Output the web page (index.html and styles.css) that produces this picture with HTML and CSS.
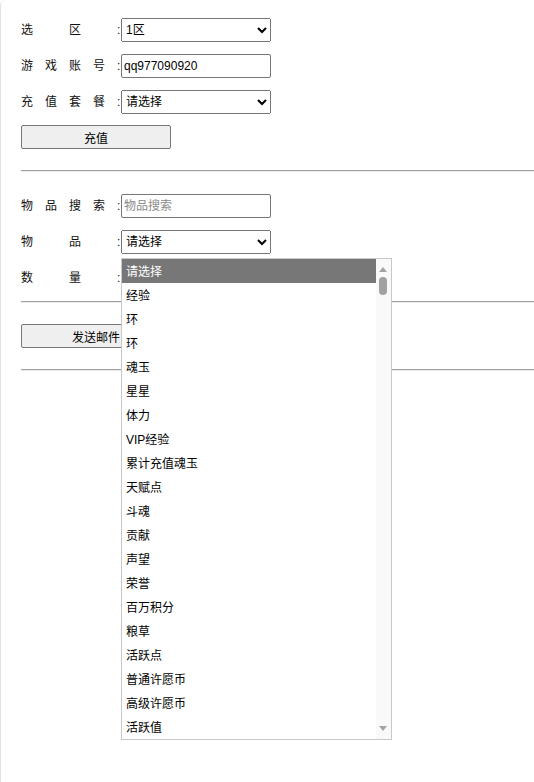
FILE: index.html
```html
<!DOCTYPE html>
<html lang="zh-CN">
<head>
<meta charset="utf-8">
<title>充值</title>
<link rel="stylesheet" href="styles.css">
</head>
<body>
<div class="frame">
  <div class="section first">
    <div class="row"><span class="label">选　区　:</span><select class="ctl"><option>1区</option></select></div>
    <div class="row"><span class="label">游戏账号:</span><input class="ctl" type="text" value="qq977090920"></div>
    <div class="row"><span class="label">充值套餐:</span><select class="ctl"><option>请选择</option></select></div>
    <div class="btn-row"><button class="btn">充值</button></div>
  </div>
  <hr class="rule">
  <div class="section">
    <div class="row"><span class="label">物品搜索:</span><input class="ctl" type="text" placeholder="物品搜索"></div>
    <div class="row menu-host"><span class="label">物　品　:</span><select class="ctl"><option>请选择</option></select>
      <div class="popup">
        <ul class="opts">
          <li class="sel">请选择</li>
          <li>经验</li>
          <li>环</li>
          <li>环</li>
          <li>魂玉</li>
          <li>星星</li>
          <li>体力</li>
          <li>VIP经验</li>
          <li>累计充值魂玉</li>
          <li>天赋点</li>
          <li>斗魂</li>
          <li>贡献</li>
          <li>声望</li>
          <li>荣誉</li>
          <li>百万积分</li>
          <li>粮草</li>
          <li>活跃点</li>
          <li>普通许愿币</li>
          <li>高级许愿币</li>
          <li>活跃值</li>
        </ul>
        <div class="sbar">
          <span class="arr up"></span>
          <span class="thumb"></span>
          <span class="arr down"></span>
        </div>
      </div>
    </div>
    <div class="row"><span class="label">数　量　:</span><input class="ctl" type="text"></div>
  </div>
  <hr class="rule mid">
  <div class="btn-row second"><button class="btn">发送邮件</button></div>
  <hr class="rule">
</div>
</body>
</html>
```
FILE: styles.css
```css
html, body {
  margin: 0;
  padding: 0;
  background: #fff;
}
body {
  font-family: "Liberation Sans", "Noto Sans CJK SC", sans-serif;
  font-size: 12px;
  color: #111;
}
.frame {
  min-height: 782px;
  box-sizing: border-box;
  border-left: 1px solid #e2e2e2;
  border-top-left-radius: 6px;
  padding-top: 18px;
}
.section {
  padding-left: 20px;
}
.row {
  display: flex;
  align-items: center;
  height: 24px;
  margin-bottom: 12px;
}
.row:last-child {
  margin-bottom: 0;
}
.label {
  width: 100px;
  letter-spacing: 12px;
  white-space: nowrap;
  line-height: 24px;
  color: #111;
}
.ctl {
  box-sizing: border-box;
  width: 150px;
  height: 24px;
  margin: 0;
  font-family: "Liberation Sans", "Noto Sans CJK SC", sans-serif;
  font-size: 12px;
  color: #000;
}
input.ctl {
  padding: 1px 2px;
  border: 1px solid #767676;
  border-radius: 2px;
}
input.ctl::placeholder {
  color: #8a8a8a;
}
.btn-row {
  margin-top: -1px;
}
.btn {
  box-sizing: border-box;
  width: 150px;
  height: 24px;
  margin: 0;
  padding: 0;
  background: #efefef;
  border: 1px solid #767676;
  border-radius: 2px;
  font-family: "Liberation Sans", "Noto Sans CJK SC", sans-serif;
  font-size: 12px;
  color: #000;
}
.rule {
  margin: 21px 0 22px 20px;
  height: 0;
  border: 0;
  border-top: 1px solid #a0a0a0;
  border-bottom: 1px solid #ececec;
}
.rule.mid {
  margin-top: 11px;
  margin-bottom: 21px;
}
.btn-row.second {
  margin: 0 0 0 20px;
}
.menu-host {
  position: relative;
}
.popup {
  position: absolute;
  left: 100px;
  top: 28px;
  width: 271px;
  height: 482px;
  box-sizing: border-box;
  border: 1px solid #c8c8c8;
  background: #fff;
  display: flex;
  z-index: 5;
}
.opts {
  list-style: none;
  margin: 0;
  padding: 0;
  flex: 1;
}
.opts li {
  box-sizing: border-box;
  height: 24px;
  padding-top: 2px;
  line-height: 22px;
  padding-left: 4px;
  color: #000;
  white-space: nowrap;
}
.opts li.sel {
  background: #777;
  color: #fff;
}
.sbar {
  width: 15px;
  background: #f9f9f9;
  position: relative;
}
.arr {
  position: absolute;
  left: 3px;
  width: 0;
  height: 0;
  border-left: 4.5px solid transparent;
  border-right: 4.5px solid transparent;
}
.arr.up {
  top: 8px;
  border-bottom: 5px solid #a3a3a3;
}
.arr.down {
  bottom: 8px;
  border-top: 5px solid #a3a3a3;
}
.thumb {
  position: absolute;
  left: 3px;
  top: 18px;
  width: 8px;
  height: 18px;
  border-radius: 4px;
  background: #a1a1a1;
}
```
